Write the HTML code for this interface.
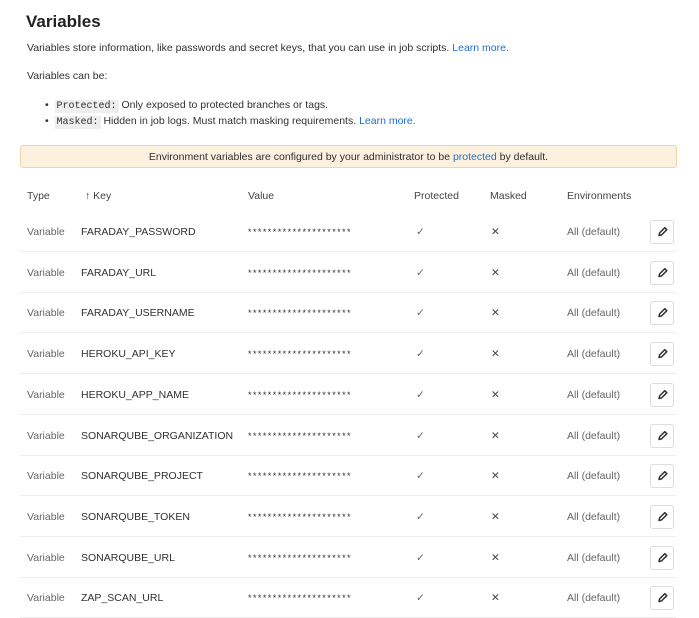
<!DOCTYPE html>
<html><head><meta charset="utf-8"><style>
body{margin:0;width:699px;height:612px;overflow:hidden;background:#fff;font-family:"Liberation Sans",sans-serif;color:#303030;position:relative}
.a{position:absolute;white-space:nowrap}
h1{position:absolute;left:26px;top:12px;margin:0;font-size:17px;font-weight:bold;color:#222}
.t{font-size:10.5px}
a{color:#1f6fc5;text-decoration:none}
code{font-family:"Liberation Mono",monospace;background:#eee;font-size:10px;padding:1px 2px}
.alert{position:absolute;left:20px;top:145px;width:655px;height:21px;background:#fcf0de;border:1px solid #efd5a8;border-radius:3px;text-align:center;line-height:22px;font-size:10.5px}
.row{position:absolute;left:20px;width:656px;height:40px;border-bottom:1px solid #ececec;font-size:10.5px}
.row span{position:absolute;top:1px;line-height:40px;white-space:nowrap}
.btn{position:absolute;left:630px;top:9px;width:22px;height:22px;border:1px solid #ddd;border-radius:3px;background:#fff}
.hd{position:absolute;top:190px;font-size:10.5px;color:#444}
</style></head><body>
<h1>Variables</h1>
<div class="a t" style="left:27px;top:42px">Variables store information, like passwords and secret keys, that you can use in job scripts. <a>Learn more.</a></div>
<div class="a t" style="left:27px;top:70px">Variables can be:</div>
<div class="a t" style="left:45px;top:99px">•&nbsp;&nbsp;<code>Protected:</code> Only exposed to protected branches or tags.</div>
<div class="a t" style="left:45px;top:115px">•&nbsp;&nbsp;<code>Masked:</code> Hidden in job logs. Must match masking requirements. <a>Learn more.</a></div>
<div class="alert">Environment variables are configured by your administrator to be <a>protected</a> by default.</div>
<div class="hd" style="left:27px">Type</div>
<div class="hd" style="left:85px">↑ Key</div>
<div class="hd" style="left:248px">Value</div>
<div class="hd" style="left:414px">Protected</div>
<div class="hd" style="left:490px">Masked</div>
<div class="hd" style="left:567px">Environments</div>
<div id="rows"></div>
<script>
var k=["FARADAY_PASSWORD","FARADAY_URL","FARADAY_USERNAME","HEROKU_API_KEY","HEROKU_APP_NAME","SONARQUBE_ORGANIZATION","SONARQUBE_PROJECT","SONARQUBE_TOKEN","SONARQUBE_URL","ZAP_SCAN_URL"];
var h="";
k.forEach(function(n,i){var y=211+i*40.7;
h+='<div class="row" style="top:'+y+'px"><span style="left:7px;color:#666">Variable</span><span style="left:61px">'+n+'</span><span style="left:228px;font-size:9px;letter-spacing:1.45px">*********************</span><span style="left:396px;color:#666">✓</span><span style="left:471px;color:#444">✕</span><span style="left:547px;color:#666">All (default)</span><div class="btn"><svg width="22" height="22" viewBox="0 0 22 22"><path d="M8 14.5l0.6-2.6 5.2-5.2 2 2-5.2 5.2z" fill="none" stroke="#333" stroke-width="1.5" stroke-linejoin="round"/></svg></div></div>';});
document.getElementById("rows").innerHTML=h;
</script>
</body></html>
